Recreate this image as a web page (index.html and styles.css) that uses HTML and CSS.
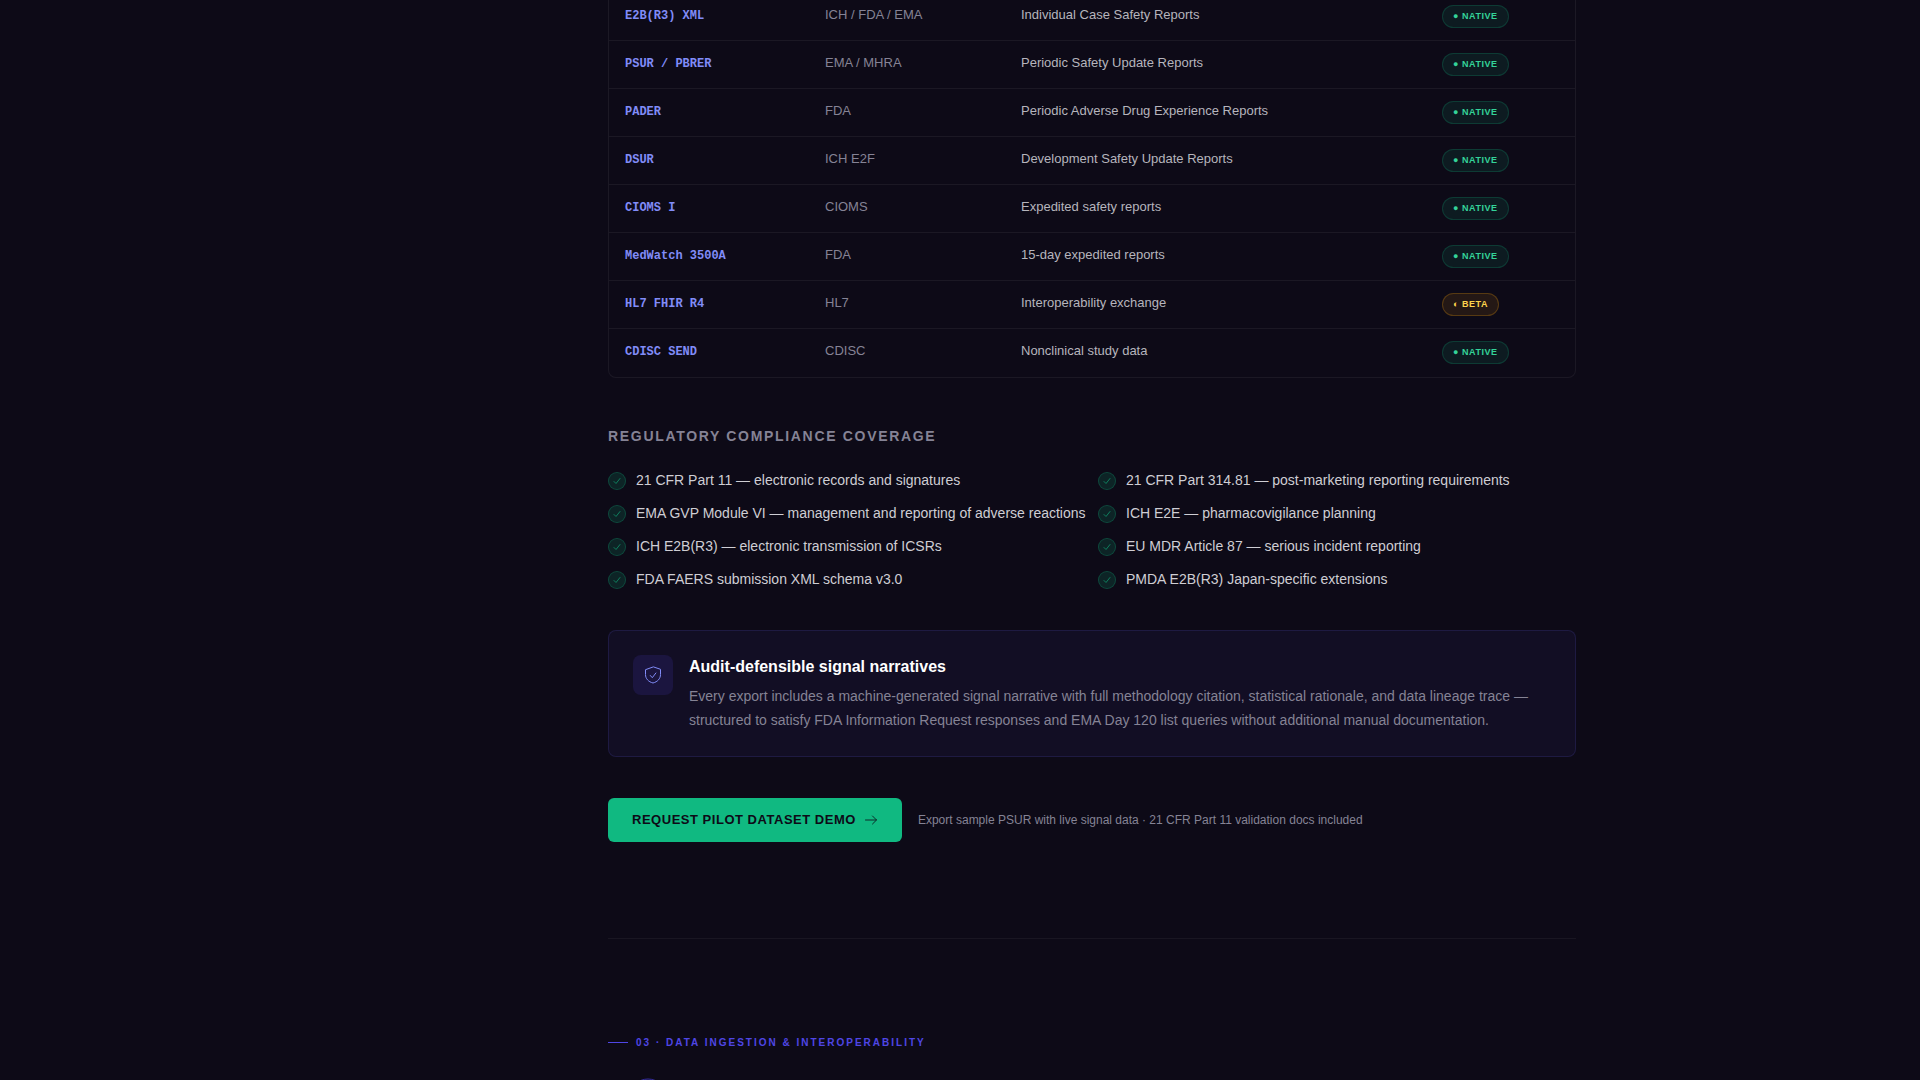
FILE: index.html
```html
<!DOCTYPE html>
<html lang="en">

<head>
    <meta charset="UTF-8">
    <meta name="viewport" content="width=device-width, initial-scale=1.0">
    <title>Regulatory Exports</title>
    <link rel="stylesheet" href="styles.css">
</head>

<body>
    <svg class="sprite" aria-hidden="true">
        <symbol id="check" viewBox="0 0 12 12">
            <path d="M3 6.5l2 2 4-5" />
        </symbol>
    </svg>

    <div class="layout">
        <main class="content">
            <section class="exports">
                <div class="table-wrap">
                    <table class="formats">
                        <tbody>
                            <tr>
                                <td class="format">E2B(R3) XML</td>
                                <td class="agency">ICH / FDA / EMA</td>
                                <td class="desc">Individual Case Safety Reports</td>
                                <td><span class="badge native">● Native</span></td>
                            </tr>
                            <tr>
                                <td class="format">PSUR / PBRER</td>
                                <td class="agency">EMA / MHRA</td>
                                <td class="desc">Periodic Safety Update Reports</td>
                                <td><span class="badge native">● Native</span></td>
                            </tr>
                            <tr>
                                <td class="format">PADER</td>
                                <td class="agency">FDA</td>
                                <td class="desc">Periodic Adverse Drug Experience Reports</td>
                                <td><span class="badge native">● Native</span></td>
                            </tr>
                            <tr>
                                <td class="format">DSUR</td>
                                <td class="agency">ICH E2F</td>
                                <td class="desc">Development Safety Update Reports</td>
                                <td><span class="badge native">● Native</span></td>
                            </tr>
                            <tr>
                                <td class="format">CIOMS I</td>
                                <td class="agency">CIOMS</td>
                                <td class="desc">Expedited safety reports</td>
                                <td><span class="badge native">● Native</span></td>
                            </tr>
                            <tr>
                                <td class="format">MedWatch 3500A</td>
                                <td class="agency">FDA</td>
                                <td class="desc">15-day expedited reports</td>
                                <td><span class="badge native">● Native</span></td>
                            </tr>
                            <tr>
                                <td class="format">HL7 FHIR R4</td>
                                <td class="agency">HL7</td>
                                <td class="desc">Interoperability exchange</td>
                                <td><span class="badge beta">◐ Beta</span></td>
                            </tr>
                            <tr>
                                <td class="format">CDISC SEND</td>
                                <td class="agency">CDISC</td>
                                <td class="desc">Nonclinical study data</td>
                                <td><span class="badge native">● Native</span></td>
                            </tr>
                        </tbody>
                    </table>
                </div>

                <h3 class="subhead">Regulatory compliance coverage</h3>
                <ul class="coverage">
                    <li><span class="tick"><svg><use href="#check" /></svg></span>21 CFR Part 11 — electronic records and signatures</li>
                    <li><span class="tick"><svg><use href="#check" /></svg></span>21 CFR Part 314.81 — post-marketing reporting requirements</li>
                    <li><span class="tick"><svg><use href="#check" /></svg></span>EMA GVP Module VI — management and reporting of adverse reactions</li>
                    <li><span class="tick"><svg><use href="#check" /></svg></span>ICH E2E — pharmacovigilance planning</li>
                    <li><span class="tick"><svg><use href="#check" /></svg></span>ICH E2B(R3) — electronic transmission of ICSRs</li>
                    <li><span class="tick"><svg><use href="#check" /></svg></span>EU MDR Article 87 — serious incident reporting</li>
                    <li><span class="tick"><svg><use href="#check" /></svg></span>FDA FAERS submission XML schema v3.0</li>
                    <li><span class="tick"><svg><use href="#check" /></svg></span>PMDA E2B(R3) Japan-specific extensions</li>
                </ul>

                <div class="callout">
                    <div class="callout-icon">
                        <svg viewBox="0 0 20 20" aria-hidden="true">
                            <path d="M10 2L2.500 4.700V9.500c0 4.200 3 7.300 7.500 8.500 4.500-1.200 7.500-4.300 7.500-8.500V4.700z" />
                            <path d="M7.300 10.500l2 2.200 3.600-4.700" />
                        </svg>
                    </div>
                    <div>
                        <h4>Audit-defensible signal narratives</h4>
                        <p>Every export includes a machine-generated signal narrative with full methodology citation, statistical rationale, and data lineage trace — structured to satisfy FDA Information Request responses and EMA Day 120 list queries without additional manual documentation.</p>
                    </div>
                </div>

                <div class="cta">
                    <a class="btn" href="#demo">Request pilot dataset demo
                        <svg viewBox="0 0 14 14" aria-hidden="true">
                            <path d="M1.500 7h11M8.500 3L12.500 7l-4 4" />
                        </svg>
                    </a>
                    <span class="cta-note">Export sample PSUR with live signal data · 21 CFR Part 11 validation docs included</span>
                </div>
            </section>

            <section class="ingestion">
                <div class="eyebrow">03 · Data ingestion &amp; interoperability</div>
                <svg class="ring" viewBox="0 0 80 40" aria-hidden="true">
                    <circle cx="40" cy="20" r="19" />
                </svg>
            </section>
        </main>
    </div>
</body>

</html>
```
FILE: styles.css
```css
* {
    box-sizing: border-box;
    margin: 0;
    padding: 0;
}

body {
    background-color: #0d0a17;
    color: #fff;
    font-family: "Liberation Sans", Arial, sans-serif;
}

svg {
    fill: none;
    stroke: currentColor;
    stroke-linecap: round;
    stroke-linejoin: round;
}

.sprite {
    display: none;
}

.layout {
    display: grid;
    grid-template-columns: 200px 1fr;
    gap: 64px;
    max-width: 1280px;
    margin: 0 auto;
    padding: 0 24px;
}

.content {
    grid-column: 2;
}

.exports {
    padding-bottom: 96px;
    border-bottom: 1px solid rgba(255, 255, 255, 0.05);
}

.table-wrap {
    border: 1px solid rgba(255, 255, 255, 0.06);
    border-top: none;
    border-radius: 0 0 8px 8px;
}

.formats {
    width: 100%;
    border-collapse: separate;
    border-spacing: 0;
    table-layout: fixed;
}

.formats td {
    height: 48px;
    padding: 12px 16px;
    border-bottom: 1px solid rgba(255, 255, 255, 0.06);
    font-size: 13px;
    line-height: 20px;
    vertical-align: top;
}

.formats tr:first-child td {
    height: 41px;
    padding-top: 5px;
}

.formats tr:last-child td {
    border-bottom: none;
}

.formats td:nth-child(1) {
    width: 200px;
}

.formats td:nth-child(2) {
    width: 196px;
}

.formats td:nth-child(4) {
    width: 149px;
}

.formats .format {
    color: #818cf8;
    font-family: "Liberation Mono", "Courier New", monospace;
    font-size: 12px;
    font-weight: 700;
    line-height: 22px;
}

.formats .agency {
    color: #858395;
}

.formats .desc {
    color: #b6b5bd;
}

.badge {
    display: inline-block;
    padding: 4px 10px;
    border: 1px solid;
    border-radius: 12px;
    font-size: 9px;
    font-weight: 700;
    line-height: 13px;
    letter-spacing: 0.06em;
    text-transform: uppercase;
    vertical-align: top;
    white-space: nowrap;
}

.native {
    color: #34d399;
    background-color: rgba(16, 185, 129, 0.1);
    border-color: rgba(16, 185, 129, 0.2);
}

.beta {
    color: #fcd34d;
    background-color: rgba(245, 158, 11, 0.1);
    border-color: rgba(245, 158, 11, 0.25);
}

.subhead {
    margin: 48px 0 24px;
    color: #858395;
    font-size: 14px;
    line-height: 20px;
    letter-spacing: 0.12em;
    text-transform: uppercase;
}

.coverage {
    display: grid;
    grid-template-columns: 1fr 1fr;
    gap: 13px 12px;
    list-style: none;
}

.coverage li {
    display: flex;
    gap: 10px;
    color: #cfced4;
    font-size: 14px;
    line-height: 20px;
    white-space: nowrap;
}

.tick {
    display: flex;
    align-items: center;
    justify-content: center;
    flex-shrink: 0;
    width: 18px;
    height: 18px;
    margin-top: 2px;
    border: 1px solid rgba(16, 185, 129, 0.25);
    border-radius: 50%;
    background-color: rgba(16, 185, 129, 0.15);
    color: #0f7f5e;
}

.tick svg {
    width: 12px;
    height: 12px;
}

.callout {
    display: flex;
    gap: 16px;
    margin: 41px 0;
    padding: 24px;
    border: 1px solid rgba(99, 102, 241, 0.15);
    border-radius: 8px;
    background-color: #120e24;
}

.callout-icon {
    display: flex;
    align-items: center;
    justify-content: center;
    flex-shrink: 0;
    width: 40px;
    height: 40px;
    border-radius: 8px;
    background-color: #1b153f;
    color: #818cf8;
}

.callout-icon svg {
    width: 20px;
    height: 20px;
}

.callout h4 {
    margin-bottom: 5px;
    font-size: 16px;
    line-height: 24px;
}

.callout p {
    color: #858395;
    font-size: 14px;
    line-height: 24px;
}

.cta {
    display: flex;
    align-items: center;
    gap: 16px;
}

.btn {
    display: flex;
    align-items: center;
    gap: 8px;
    padding: 12px 24px;
    border-radius: 6px;
    background-color: #10b981;
    color: #0d0a17;
    font-size: 13px;
    font-weight: 700;
    line-height: 20px;
    letter-spacing: 0.04em;
    text-decoration: none;
    text-transform: uppercase;
}

.btn svg {
    width: 14px;
    height: 14px;
    opacity: 0.8;
}

.cta-note {
    color: #858395;
    font-size: 12px;
}

.ingestion {
    height: 141px;
    padding-top: 96px;
    overflow: hidden;
}

.eyebrow {
    display: flex;
    align-items: center;
    gap: 8px;
    color: #4f46e5;
    font-size: 10px;
    font-weight: 700;
    line-height: 15px;
    letter-spacing: 0.2em;
    text-transform: uppercase;
}

.eyebrow::before {
    content: "";
    width: 20px;
    height: 1px;
    background-color: #4f46e5;
}

.ring {
    display: block;
    width: 80px;
    height: 40px;
    margin-top: 28px;
    color: #3730a3;
}
```
